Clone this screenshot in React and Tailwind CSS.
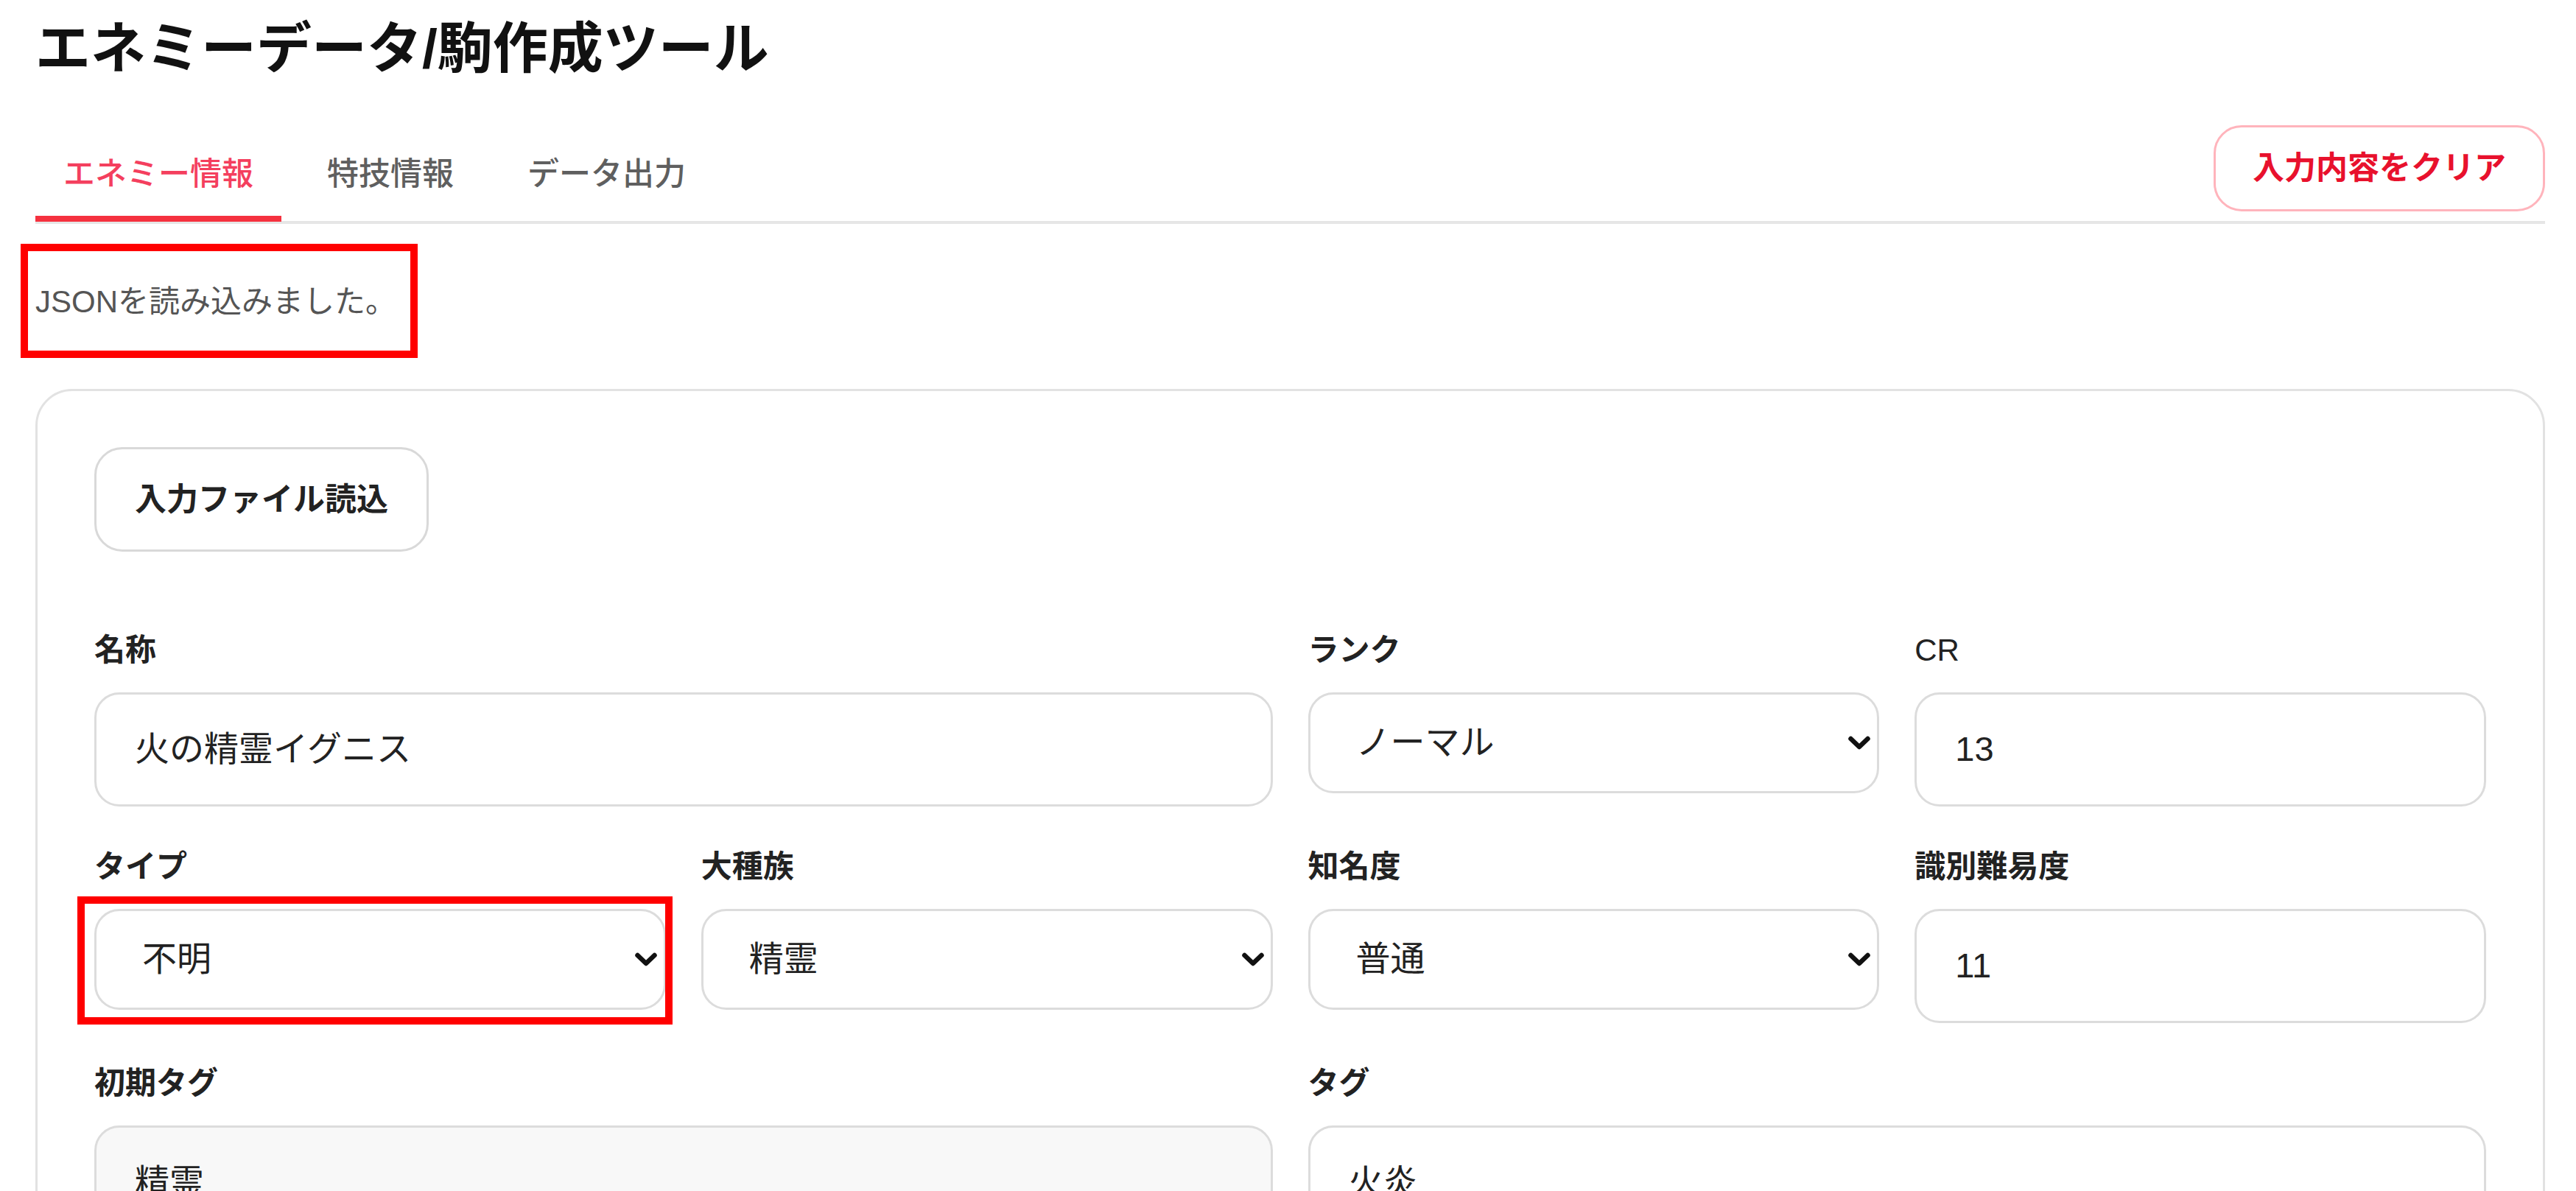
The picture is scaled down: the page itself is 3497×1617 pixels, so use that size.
import React from "react";

const FONT = "font-['Liberation_Sans','Noto_Sans_CJK_JP',sans-serif]";

function Chevron() {
  return (
    <svg width="32" height="22" viewBox="0 0 32 22" fill="none" className="shrink-0">
      <path d="M4.5 5l11.5 11 11.5-11" stroke="#111" strokeWidth="6.5" strokeLinecap="round" strokeLinejoin="round" />
    </svg>
  );
}

function Field({ label, value, select, gray, span2, highlight, labelNormal }) {
  const box = (
    <div
      className={
        "border-[3px] border-[#dcdcdc] rounded-[34px] flex items-center justify-between text-[47px] text-[#222] " +
        (select ? "h-[137px] pl-[62px] pr-[8px] " : "h-[155px] pl-[52px] pr-[20px] ") +
        (gray ? "bg-[#f8f8f8]" : "bg-white")
      }
    >
      <span>{value}</span>
      {select && <Chevron />}
    </div>
  );
  return (
    <div className={span2 ? "col-span-2 flex flex-col gap-[26px]" : "flex flex-col gap-[26px]"}>
      <div className={"text-[42px] leading-[63px] text-[#222] " + (labelNormal ? "font-normal" : "font-semibold")}>
        {label}
      </div>
      {highlight ? (
        <div className="relative">
          {box}
          <div className="absolute -left-[23px] -top-[17px] -right-[9px] -bottom-[20px] border-[10px] border-[#ff0000] pointer-events-none" />
        </div>
      ) : (
        box
      )}
    </div>
  );
}

export default function App() {
  return (
    <div className={"bg-white min-h-screen w-full " + FONT}>
      <div className="pl-[48px] pr-[42px] pt-[21px]">
        <h1 className="text-[75px] leading-[90px] font-bold text-[#111]">エネミーデータ/駒作成ツール</h1>

        <div className="mt-[59px] flex items-end justify-between border-b-[4px] border-[#e6e6e6]">
          <div className="flex gap-[24px] text-[43px] leading-[64px]">
            <div className="px-[38px] pt-[16px] pb-[25px] border-b-[8px] border-[#f5313f] -mb-[1px] text-[#f43f5e] font-medium">
              エネミー情報
            </div>
            <div className="px-[38px] pt-[16px] pb-[25px] border-b-[8px] border-transparent -mb-[1px] text-[#5f5f5f] font-medium">
              特技情報
            </div>
            <div className="px-[38px] pt-[16px] pb-[25px] border-b-[8px] border-transparent -mb-[1px] text-[#5f5f5f] font-medium">
              データ出力
            </div>
          </div>
          <div className="mb-[13px] h-[117px] px-[50px] flex items-center border-[3px] border-[#ffb4bc] rounded-[38px] text-[43px] font-semibold text-[#e8112d]">
            入力内容をクリア
          </div>
        </div>

        <div className="mt-[74px] relative w-fit">
          <div className="text-[42px] leading-[63px] text-[#555]">JSONを読み込みました。</div>
          <div className="absolute -left-[20px] -top-[47px] w-[539px] h-[155px] border-[10px] border-[#ff0000] pointer-events-none" />
        </div>

        <div className="mt-[87px] border-[3px] border-[#e2e2e2] rounded-[50px] px-[77px] pt-[76px] pb-[77px]">
          <div className="inline-flex h-[142px] items-center px-[52px] border-[3px] border-[#d9d9d9] rounded-[38px] text-[43px] font-semibold text-[#222]">
            入力ファイル読込
          </div>

          <div className="mt-[102px] grid grid-cols-4 gap-x-[48px] gap-y-[50px]">
            <Field label="名称" value="火の精霊イグニス" span2 />
            <Field label="ランク" value="ノーマル" select />
            <Field label="CR" value="13" labelNormal />
            <Field label="タイプ" value="不明" select highlight />
            <Field label="大種族" value="精霊" select />
            <Field label="知名度" value="普通" select />
            <Field label="識別難易度" value="11" />
            <Field label="初期タグ" value="精霊" span2 gray />
            <Field label="タグ" value="火炎" span2 />
          </div>
        </div>
      </div>
    </div>
  );
}
